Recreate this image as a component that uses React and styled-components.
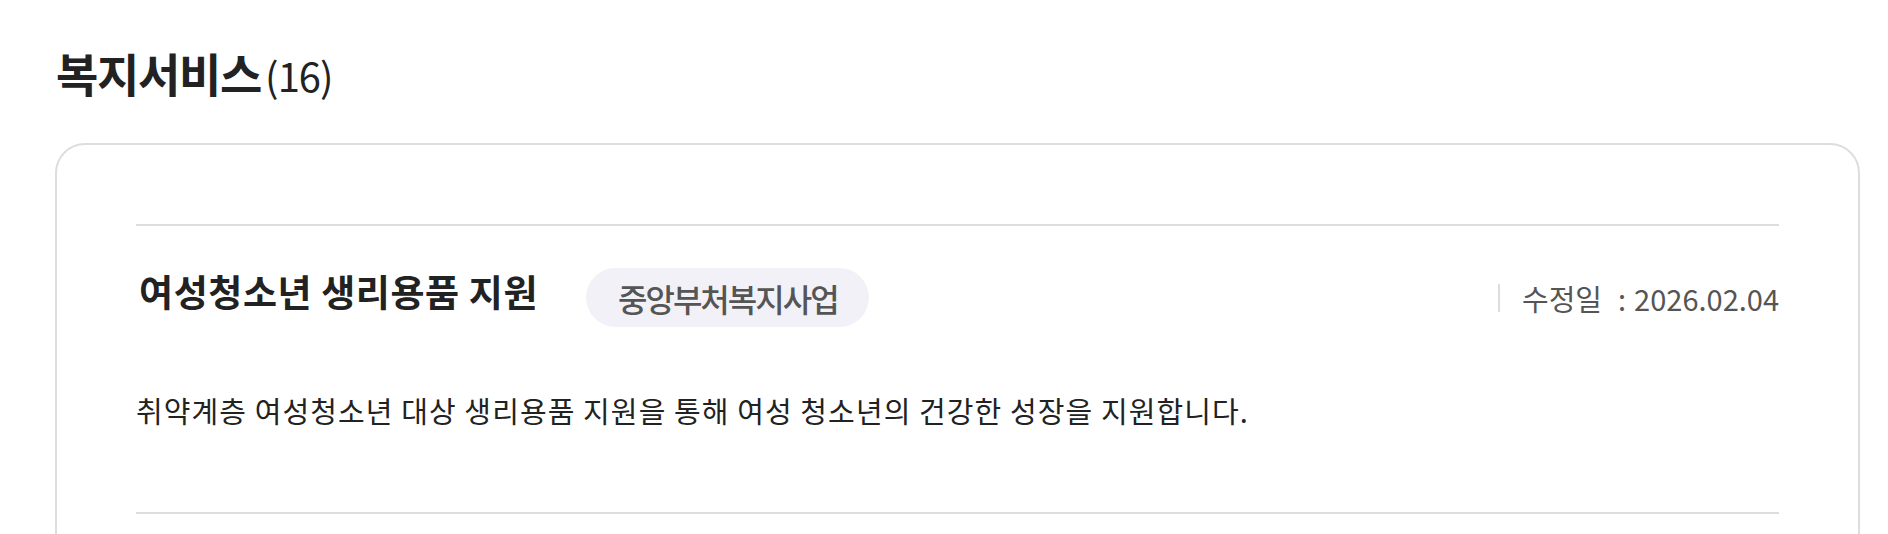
import * as React from "react"
import styled, { createGlobalStyle } from 'styled-components'

const services = [
  {
    title: '여성청소년 생리용품 지원',
    category: '중앙부처복지사업',
    updated: '2026.02.04',
    summary: '취약계층 여성청소년 대상 생리용품 지원을 통해 여성 청소년의 건강한 성장을 지원합니다.',
  },
]

const App = () => {
  const items = []
  services.forEach((item, index) => {
    items.push((
      <StyledServiceItem key={index}>
        <StyledItemHead>
          <StyledItemTitle>{item.title}</StyledItemTitle>
          <StyledBadge>{item.category}</StyledBadge>
          <StyledDate>
            <span>수정일</span>
            <StyledColon>:</StyledColon>
            <span>{item.updated}</span>
          </StyledDate>
        </StyledItemHead>
        <StyledSummary>{item.summary}</StyledSummary>
      </StyledServiceItem>
    ))
  })
  return (
    <StyledPage>
      <GlobalStyle />
      <StyledHeading>
        복지서비스<StyledCount>(16)</StyledCount>
      </StyledHeading>
      <StyledCard>
        <StyledServiceList>
          {items}
        </StyledServiceList>
      </StyledCard>
    </StyledPage>
  )
}

const GlobalStyle = createGlobalStyle`
  html, body {
    margin: 0;
    padding: 0;
    background: #fff;
  }
  body {
    font-family: "Noto Sans CJK KR", "Noto Sans", sans-serif;
    color: #222;
  }
`

const StyledPage = styled.div(props => `
  padding: 0 28px 0 55px;
  overflow: hidden;
  height: 534px;
`)

const StyledHeading = styled.h2(props => `
  margin: 0;
  padding: 40px 0 0 1px;
  height: 143px;
  box-sizing: border-box;
  display: flex;
  align-items: baseline;
  font-size: 46px;
  line-height: 64px;
  font-weight: 700;
  letter-spacing: -1.3px;
  color: #222;
`)

const StyledCount = styled.span(props => `
  margin-left: 4px;
  font-size: 40px;
  font-weight: 400;
  letter-spacing: -1px;
`)

const StyledCard = styled.div(props => `
  border: 2px solid #ddd;
  border-radius: 30px;
  padding: 79px 79px;
  min-height: 600px;
`)

const StyledServiceList = styled.ul(props => `
  list-style: none;
  margin: 0;
  padding: 0;
  border-top: 2px solid #ddd;
`)

const StyledServiceItem = styled.li(props => `
  padding: 42px 0 82px;
  border-bottom: 2px solid #ddd;
`)

const StyledItemHead = styled.div(props => `
  display: flex;
  align-items: center;
  height: 59px;
`)

const StyledItemTitle = styled.h3(props => `
  margin: 0 0 14px 3px;
  font-size: 37px;
  line-height: 48px;
  font-weight: 700;
  letter-spacing: 0.6px;
  color: #222;
`)

const StyledBadge = styled.span(props => `
  display: inline-flex;
  align-items: center;
  height: 59px;
  margin-left: 48px;
  padding: 0 31px 0 32px;
  border-radius: 30px;
  background: #f2f1f8;
  color: #555;
  font-size: 32px;
  letter-spacing: -2px;
  font-weight: 500;
`)

const StyledDate = styled.div(props => `
  margin-left: auto;
  display: flex;
  align-items: center;
  font-size: 29px;
  letter-spacing: 0;
  color: #555;
  &::before {
    content: '';
    width: 2px;
    height: 28px;
    background: #ddd;
    margin-right: 22px;
  }
`)

const StyledColon = styled.span(props => `
  margin: 0 8px 0 16px;
`)

const StyledSummary = styled.p(props => `
  margin: 63px 0 0;
  font-size: 29px;
  line-height: 40px;
  font-weight: 400;
  letter-spacing: 1.1px;
  color: #222;
`)

export default App
